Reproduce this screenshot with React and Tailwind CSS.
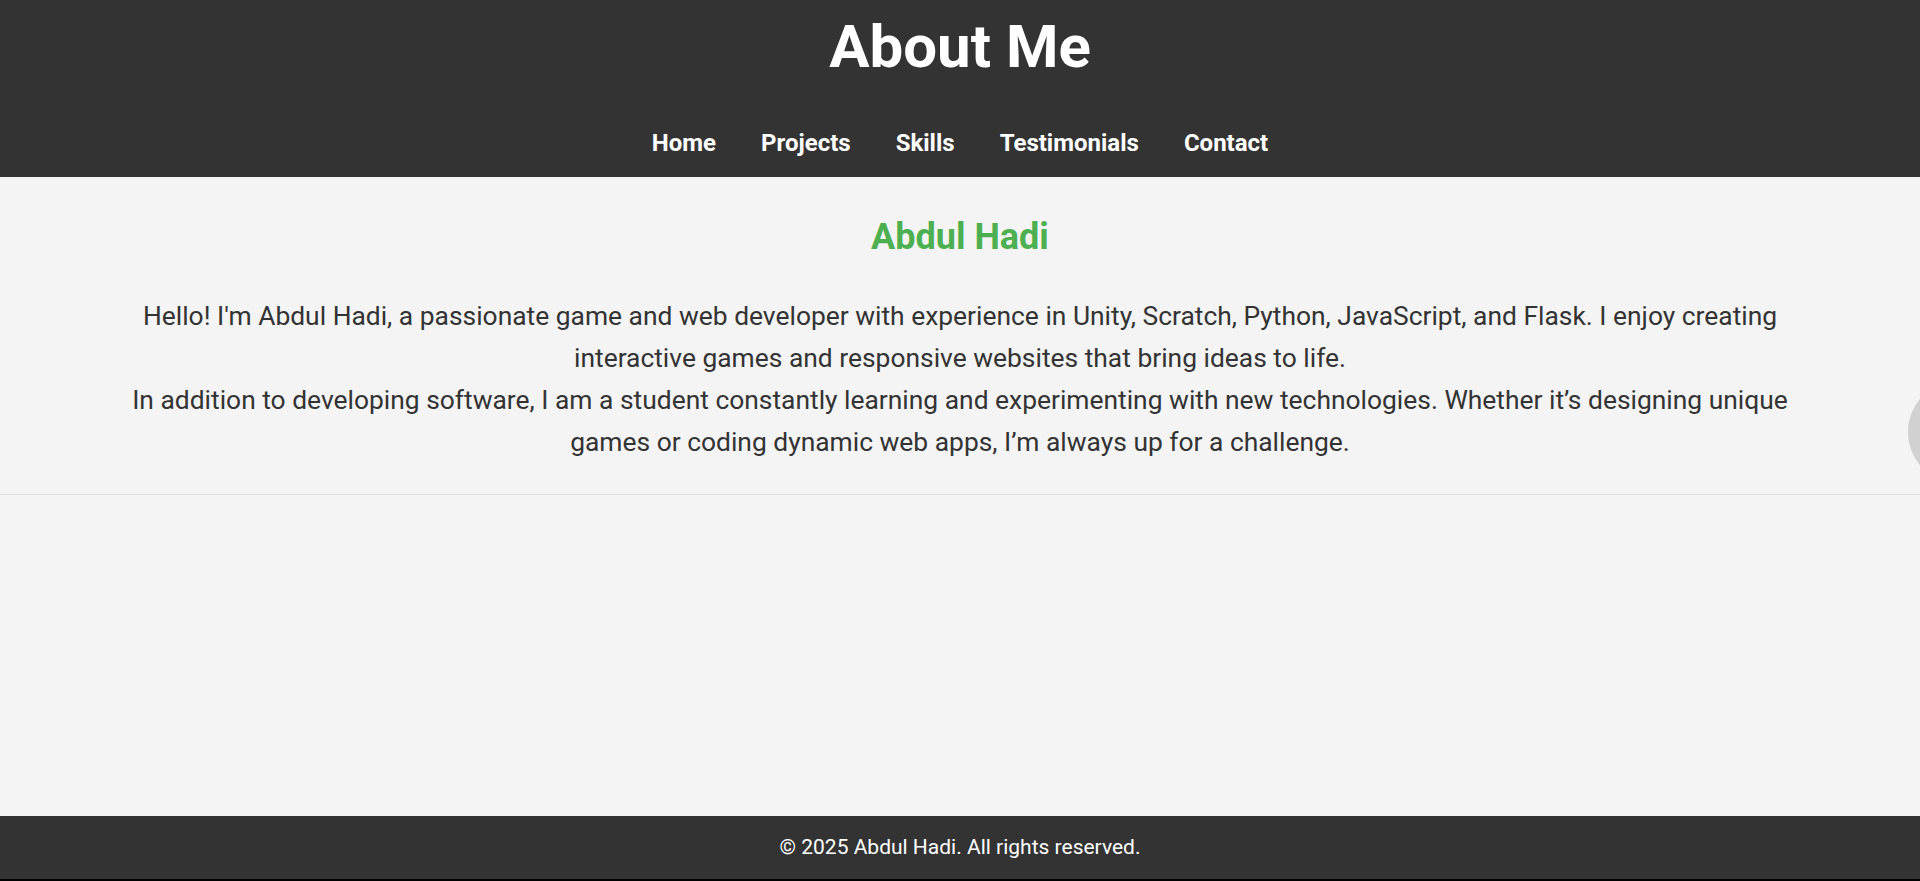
import React from "react";

export default function App() {
  const font = { fontFamily: "Roboto, 'Noto Sans', sans-serif" };
  return (
    <div className="relative flex h-[881px] flex-col overflow-hidden bg-[#f4f4f4]" style={font}>
      <header className="flex flex-col items-center bg-[#333333] pt-[17px] pb-[22px] text-white">
        <h1 className="text-[60px] font-bold leading-none">About Me</h1>
        <nav className="mt-[54px] flex gap-[45px] text-[24px] font-bold leading-[24px]">
          <a href="#">Home</a>
          <a href="#">Projects</a>
          <a href="#">Skills</a>
          <a href="#">Testimonials</a>
          <a href="#">Contact</a>
        </nav>
      </header>

      <main className="flex-1">
        <section className="flex flex-col items-center border-b border-[#dddddd] pt-[40px] pb-[31px] text-center">
          <h2 className="text-[36px] font-bold leading-[40px] text-[#4caf50]">Abdul Hadi</h2>
          <div className="mt-[38px] max-w-[1728px] text-[26.4px] leading-[42px] text-[#333333]">
            <p>
              Hello! I'm Abdul Hadi, a passionate game and web developer with experience in Unity, Scratch, Python, JavaScript, and Flask. I enjoy creating interactive games and responsive websites that bring ideas to life.
            </p>
            <p>
              In addition to developing software, I am a student constantly learning and experimenting with new technologies. Whether it’s designing unique games or coding dynamic web apps, I’m always up for a challenge.
            </p>
          </div>
        </section>
      </main>

      <footer className="flex h-[63px] items-center justify-center bg-[#333333] text-[21px] text-white">
        <p>© 2025 Abdul Hadi. All rights reserved.</p>
      </footer>
      <div className="h-[2px] bg-black" />

      <div className="absolute left-[1908px] top-[380px] h-[104px] w-[104px] rounded-full bg-[#d1d1d1]" />
    </div>
  );
}
